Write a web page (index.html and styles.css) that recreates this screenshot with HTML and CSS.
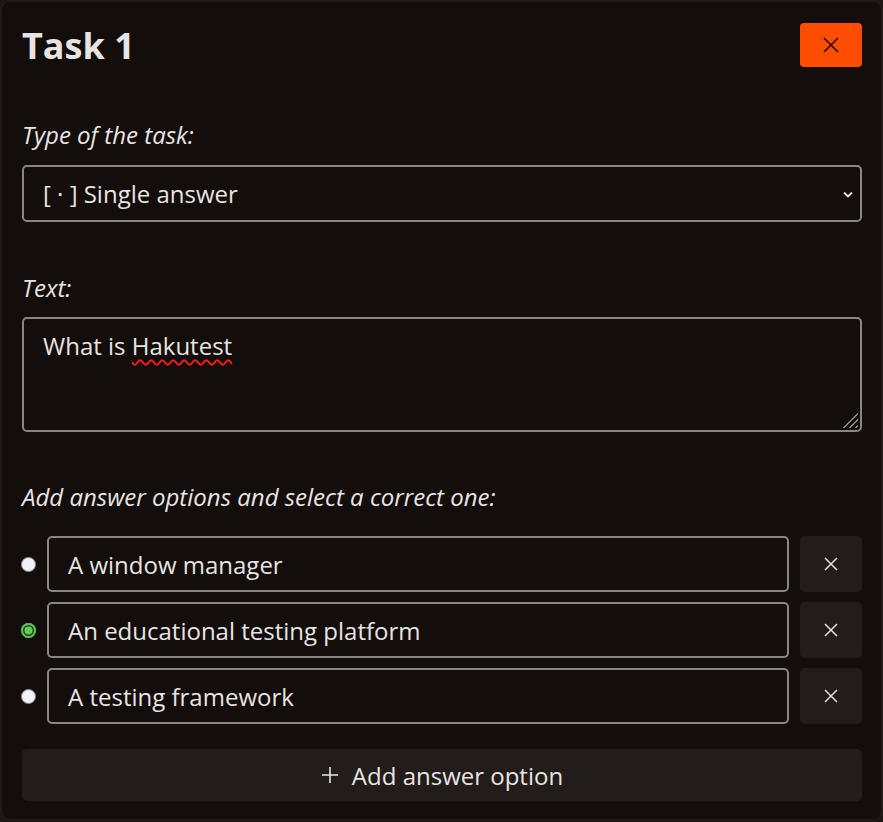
FILE: index.html
```html
<!DOCTYPE html>
<html lang="en">
<head>
<meta charset="utf-8">
<title>Task 1</title>
<link rel="stylesheet" href="styles.css">
</head>
<body>
<div class="card">
  <div class="header">
    <h1 class="title">Task 1</h1>
    <button class="close-btn" aria-label="Remove task">
      <svg width="18" height="18" viewBox="0 0 18 18"><path d="M2 2L16 16M16 2L2 16" stroke="#1a0f0a" stroke-width="1.6" fill="none"/></svg>
    </button>
  </div>

  <label class="label">Type of the task:</label>
  <div class="select">
    <span>[ · ] Single answer</span>
    <svg class="chevron" width="10" height="7" viewBox="0 0 10 7"><path d="M1 1.5L5 5.5L9 1.5" stroke="#e8e4e2" stroke-width="1.8" fill="none"/></svg>
  </div>

  <label class="label label-text">Text:</label>
  <div class="textarea">What is <span class="misspelled">Hakutest</span><span class="grip"></span></div>

  <label class="label label-options">Add answer options and select a correct one:</label>
  <div class="options">
    <div class="option">
      <span class="radio"></span>
      <div class="input">A window manager</div>
      <button class="del-btn" aria-label="Delete"><svg width="16" height="16" viewBox="0 0 16 16"><path d="M2 2L14 14M14 2L2 14" stroke="#e8e4e2" stroke-width="1.5" fill="none"/></svg></button>
    </div>
    <div class="option">
      <span class="radio checked"></span>
      <div class="input">An educational testing platform</div>
      <button class="del-btn" aria-label="Delete"><svg width="16" height="16" viewBox="0 0 16 16"><path d="M2 2L14 14M14 2L2 14" stroke="#e8e4e2" stroke-width="1.5" fill="none"/></svg></button>
    </div>
    <div class="option">
      <span class="radio"></span>
      <div class="input">A testing framework</div>
      <button class="del-btn" aria-label="Delete"><svg width="16" height="16" viewBox="0 0 16 16"><path d="M2 2L14 14M14 2L2 14" stroke="#e8e4e2" stroke-width="1.5" fill="none"/></svg></button>
    </div>
  </div>

  <button class="add-btn"><svg width="18" height="18" viewBox="0 0 18 18"><path d="M9 1V17M1 9H17" stroke="#e8e4e2" stroke-width="1.6" fill="none"/></svg><span>Add answer option</span></button>
</div>
</body>
</html>
```

FILE: styles.css
```css
* { box-sizing: border-box; }
html, body { margin: 0; padding: 0; background: #1b1615; }
body {
  font-family: "Open Sans", "Noto Sans", sans-serif;
  color: #e8e4e2;
  width: 883px;
  height: 822px;
}
.card {
  width: 883px;
  height: 821px;
  background: #130d0b;
  border: 2px solid #221b19;
  border-radius: 10px;
  padding: 20px 19px 0 19px;
  display: flex;
  flex-direction: column;
}
.header {
  display: flex;
  justify-content: space-between;
  align-items: flex-start;
}
.title {
  margin: 2px 0 0 1px;
  font-size: 36px;
  font-weight: 700;
  line-height: 44px;
}
.close-btn {
  margin-top: 1px;
  width: 62px;
  height: 44px;
  border: none;
  border-radius: 4px;
  background: #ff4d00;
  display: flex;
  align-items: center;
  justify-content: center;
  padding: 0;
}
.label {
  font-style: italic;
  font-size: 24px;
  line-height: 30px;
  margin-top: 52px;
  margin-left: 1px;
}
.select {
  margin-top: 15px;
  height: 57px;
  border: 2px solid #8a8684;
  border-radius: 5px;
  display: flex;
  align-items: center;
  justify-content: space-between;
  padding: 0 7px 0 19px;
  font-size: 24px;
  margin-left: 1px;
}
.chevron { margin-top: 1px; }
.label-text { margin-top: 51px; }
.textarea {
  position: relative;
  margin-top: 14px;
  margin-left: 1px;
  height: 115px;
  border: 2px solid #8a8684;
  border-radius: 5px;
  padding: 11px 19px;
  font-size: 24px;
  line-height: 32px;
}
.misspelled {
  text-decoration: underline wavy #ff1a1a;
  text-decoration-thickness: 1.5px;
  text-underline-offset: 4px;
}
.grip {
  position: absolute;
  right: 2px;
  bottom: 2px;
  width: 18px;
  height: 18px;
  background: repeating-linear-gradient(135deg, transparent 0 2px, #8a8684 2px 3.2px, transparent 3.2px 4.2px);
  clip-path: polygon(100% 0, 100% 100%, 0 100%);
}
.label-options { margin-top: 50px; }
.options {
  margin-top: 24px;
  display: flex;
  flex-direction: column;
  gap: 10px;
}
.option {
  display: flex;
  align-items: center;
  gap: 11px;
  padding-left: 0;
}
.radio {
  width: 15px;
  height: 15px;
  border-radius: 50%;
  background: #f4f2f4;
  border: 1px solid #8c8aa0;
  flex: none;
}
.radio.checked {
  background: #62c95a;
  border: none;
  box-shadow: inset 0 0 0 2px #5ac452, inset 0 0 0 3.5px #1f4a1c;
}
.input {
  flex: 1;
  height: 56px;
  border: 2px solid #8a8684;
  border-radius: 5px;
  display: flex;
  align-items: center;
  padding: 0 19px;
  font-size: 24px;
}
.del-btn {
  width: 62px;
  height: 56px;
  flex: none;
  border: none;
  border-radius: 5px;
  background: #221c1a;
  display: flex;
  align-items: center;
  justify-content: center;
  padding: 0;
}
.add-btn {
  margin-top: 25px;
  margin-left: 1px;
  height: 52px;
  border: none;
  border-radius: 5px;
  background: #221c1a;
  color: #e8e4e2;
  font-family: inherit;
  font-size: 24px;
  display: flex;
  align-items: center;
  justify-content: center;
  gap: 13px;
  padding: 0;
}
```
